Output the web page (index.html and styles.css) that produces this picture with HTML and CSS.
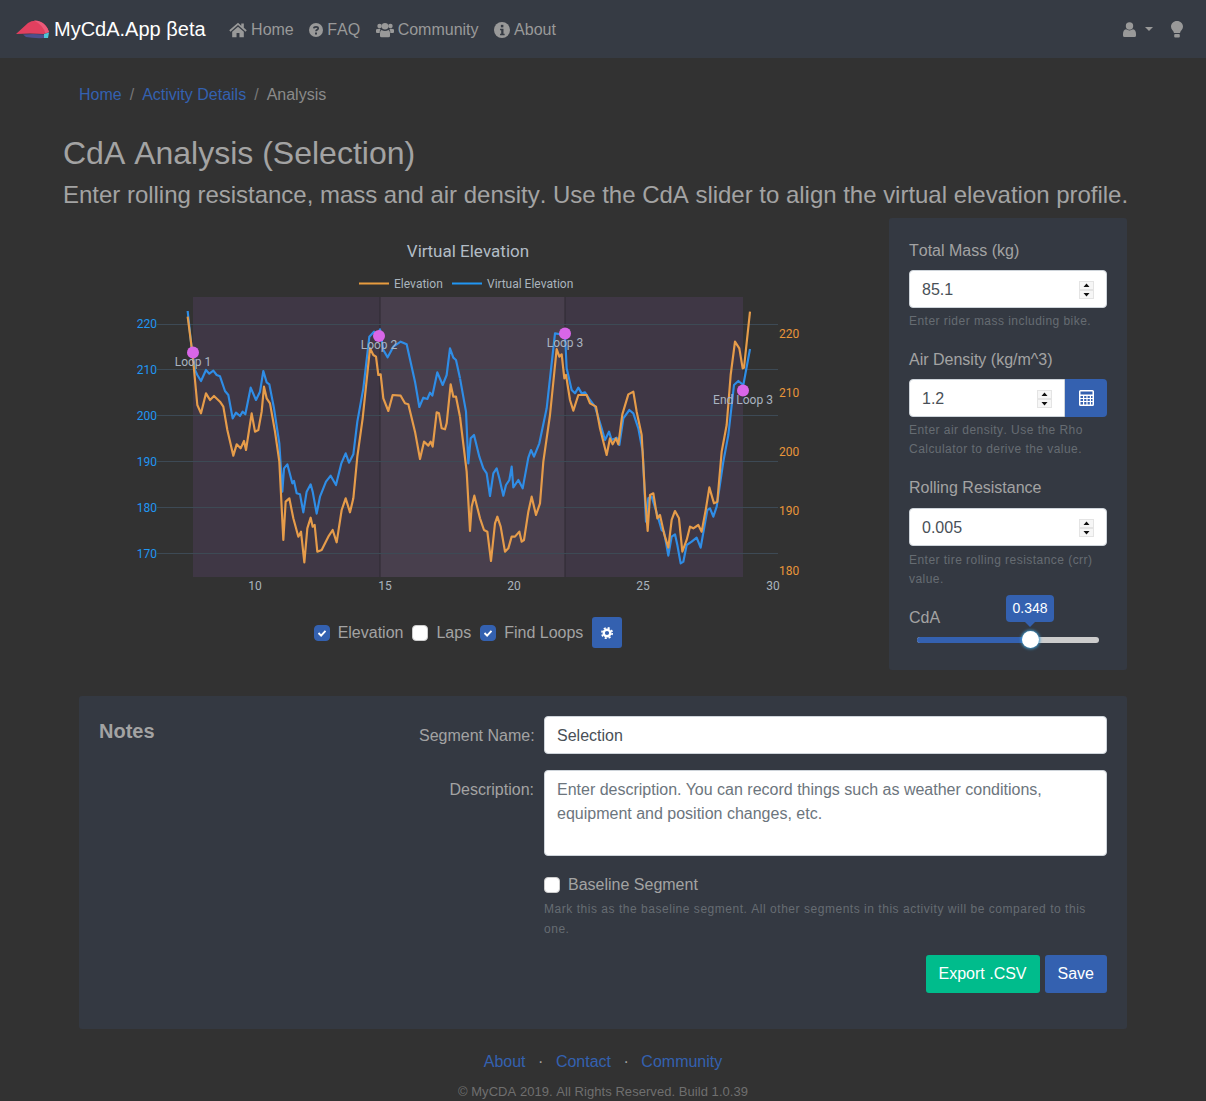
FILE: index.html
```html
<!DOCTYPE html>
<html>
<head>
  <title>CdA Analysis</title>
  <meta charset="UTF-8">
  <link rel="stylesheet" href="styles.css">
</head>
<body>

  <nav class="navbar">
    <a class="brand" href="#">
      <svg class="logo" width="36" height="24" viewBox="0 0 36 24">
        <path d="M0 18 L12 7 Q18 3 25 6 Q31 9 33 16 L28 18 Q14 17 0 18z" fill="#e2405f"/>
        <path d="M18 4.500 Q25 4.500 29 9 Q32 12 33 16 L29.500 17.500 Q27 9 18 4.500z" fill="#ec5a7a"/>
        <path d="M7 18.500 Q17 17.500 28 18.500 L28 22 Q18 22.500 10 21z" fill="#4d4f8c"/>
        <path d="M28 18 L33 16.500 L32 22 L28 22z" fill="#4fc6d6"/>
      </svg>
      MyCdA.App βeta
    </a>
    <a class="nav-link" href="#">
      <svg class="icon" width="18" height="16" viewBox="0 0 24 22"><path d="M12 1 L0 11.500 1.600 13.300 12 4.200 22.400 13.300 24 11.500 20 8V2h-3.500v3z M4 13.500V21h6v-6h4v6h6v-7.500L12 6.500z" fill="#999"/></svg>
      Home
    </a>
    <a class="nav-link" href="#">
      <svg class="icon" width="14" height="14" viewBox="0 0 14 14"><circle cx="7" cy="7" r="7" fill="#999"/><path d="M4.800 5.300 C5 3.300 9.200 3.200 9.200 5.400 C9.200 6.800 7 6.800 7 8.300" fill="none" stroke="#363b44" stroke-width="1.700"/><rect x="6" y="9.500" width="2" height="2" fill="#363b44"/></svg>
      FAQ
    </a>
    <a class="nav-link" href="#">
      <svg class="icon" width="18" height="16" viewBox="0 0 18 16"><circle cx="3.600" cy="4" r="2.300" fill="#999"/><circle cx="14.400" cy="4" r="2.300" fill="#999"/><circle cx="9" cy="4.200" r="3.300" fill="#999"/><path d="M0 7.500 Q2 6.500 4.500 7 Q3.500 9 3.700 11 H1 Q0 11 0 10z M18 7.500 Q16 6.500 13.500 7 Q14.500 9 14.300 11 H17 Q18 11 18 10z M5.500 8 Q9 10 12.500 8 Q14 8.500 14 12 V14 Q14 15.200 12.500 15.200 H5.500 Q4 15.200 4 14 V12 Q4 8.500 5.500 8z" fill="#999"/></svg>
      Community
    </a>
    <a class="nav-link" href="#">
      <svg class="icon" width="16" height="16" viewBox="0 0 14 14"><circle cx="7" cy="7" r="7" fill="#999"/><rect x="6" y="2.500" width="2.200" height="2.200" fill="#363b44"/><path d="M5.300 6h3v4.300h1v1.300H5.300v-1.300h1V7.300h-1z" fill="#363b44"/></svg>
      About
    </a>
    <div class="nav-right">
      <svg width="13" height="15" viewBox="0 0 13 15"><circle cx="6.500" cy="4" r="3.700" fill="#999"/><path d="M0 12 Q0 8 3 7.300 Q6.500 9.500 10 7.300 Q13 8 13 12 V13.500 Q13 15 11.500 15 H1.500 Q0 15 0 13.500z" fill="#999"/></svg>
      <span class="caret"></span>
      <svg class="bulb" width="12" height="17" viewBox="0 0 12 17"><path d="M6 0 C2.500 0 0 2.500 0 5.800 C0 8.500 2.500 9.500 3 12 H9 C9.500 9.500 12 8.500 12 5.800 C12 2.500 9.500 0 6 0z" fill="#999"/><rect x="3.200" y="13" width="5.600" height="3.600" rx="1" fill="#999"/></svg>
    </div>
  </nav>

  <div class="page">
    <ol class="breadcrumb">
      <li><a href="#">Home</a></li>
      <li class="sep">/</li>
      <li><a href="#">Activity Details</a></li>
      <li class="sep">/</li>
      <li>Analysis</li>
    </ol>

    <h2>CdA Analysis (Selection)</h2>
    <p class="lead">Enter rolling resistance, mass and air density. Use the CdA slider to align the virtual elevation profile.</p>

    <div class="analysis-row">
      <div class="chart-col">
        <svg class="chart" width="810" height="386" viewBox="63 218 810 386">
          <rect x="193" y="297" width="550" height="280" fill="#3f3745"/>
          <rect x="380" y="297" width="185" height="280" fill="#483f4d"/>
          <path d="M380 297v280M565 297v280" stroke="#2f2a33" stroke-width="1"/>
          <path d="M157 324.500H778M157 369.500H778M157 415.500H778M157 461.500H778M157 507.500H778M157 553.500H778" stroke="#3d4a55" stroke-width="1"/>

          <text class="chart-title" x="468" y="257">Virtual Elevation</text>

          <path d="M359 283.500h30" stroke="#e89c3f" stroke-width="2"/>
          <text class="legend" x="394" y="288">Elevation</text>
          <path d="M452 283.500h30" stroke="#2196f3" stroke-width="2"/>
          <text class="legend" x="487" y="288">Virtual Elevation</text>

          <g class="axis-left">
            <text x="157" y="328">220</text>
            <text x="157" y="374">210</text>
            <text x="157" y="420">200</text>
            <text x="157" y="466">190</text>
            <text x="157" y="512">180</text>
            <text x="157" y="558">170</text>
          </g>
          <g class="axis-right">
            <text x="779" y="338">220</text>
            <text x="779" y="397">210</text>
            <text x="779" y="456">200</text>
            <text x="779" y="515">190</text>
            <text x="779" y="575">180</text>
          </g>
          <g class="axis-bottom">
            <text x="255" y="590">10</text>
            <text x="385" y="590">15</text>
            <text x="514" y="590">20</text>
            <text x="643" y="590">25</text>
            <text x="773" y="590">30</text>
          </g>

          <g transform="translate(120 235) scale(.33333)">
            <polyline class="line-blue" points="203,228 215,340 225,405 232,420 243,438 258,405 268,416 280,407 290,420 300,424 315,468 325,480 338,550 348,533 360,543 368,530 376,538 392,458 408,495 420,470 430,408 440,442 448,448 462,520 478,625 487,770 492,700 502,688 517,745 522,738 530,775 540,778 550,832 560,770 572,748 578,770 590,836 600,785 618,740 632,722 648,750 664,685 677,655 687,683 700,658 712,560 730,460 748,305 762,290 775,300 780,283 790,345 803,367 820,335 842,320 860,328 885,440 898,516 910,488 922,492 930,473 937,482 952,412 968,450 980,420 990,340 1000,368 1008,375 1020,430"/>
          </g>
          <g transform="translate(460 235) scale(.33333)">
            <polyline class="line-blue" points="0,430 18,530 25,685 32,610 42,600 58,665 70,700 80,715 90,783 100,715 110,700 118,730 130,782 138,750 148,735 155,695 160,757 175,735 188,760 205,668 213,645 222,665 238,625 260,520 285,295 315,300 320,400 335,465 345,475 355,458 365,475 375,472 390,495 405,515 425,580 435,615 447,590 455,615 470,608 478,630 490,550 508,525 520,535 535,580 548,650 558,860 565,790 575,785 592,840 605,885 612,890 625,962 635,905 645,898 652,930 662,985 670,980 680,930 695,920 710,908 722,938 742,825 750,820 760,845 770,815 790,680 805,600 822,450 835,438 850,450 870,342"/>
          </g>
          <g transform="translate(120 235) scale(.33333)">
            <polyline class="line-orange" points="203,245 218,360 232,510 243,535 258,475 270,495 282,483 300,500 310,515 322,585 340,662 350,628 362,640 372,618 378,645 395,535 405,590 415,585 425,530 432,455 440,490 450,505 465,590 478,680 490,915 497,800 508,790 520,850 535,905 543,890 553,982 562,880 572,848 578,875 584,870 592,950 605,945 625,905 638,885 650,922 665,825 677,790 690,832 700,790 712,665 728,550 750,340 760,360 768,365 775,420 782,418 790,490 805,528 818,480 842,482 855,505 865,508 885,590 900,672 912,620 925,632 932,620 938,635 950,532 957,535 965,580 975,583 980,565 992,448 1000,485 1008,485 1020,545"/>
          </g>
          <g transform="translate(460 235) scale(.33333)">
            <polyline class="line-orange" points="0,545 20,710 30,888 35,815 43,782 60,850 72,885 82,890 93,978 105,865 112,845 122,875 135,950 145,940 155,905 165,905 178,890 185,920 192,915 205,830 215,785 228,840 240,805 250,680 270,540 290,342 298,365 305,358 313,430 318,420 330,495 340,527 355,480 380,480 390,505 408,515 420,580 440,660 450,610 458,628 468,610 475,628 487,538 505,478 520,470 530,530 545,600 555,780 563,888 570,780 580,775 592,850 600,840 612,895 625,938 635,855 645,828 657,850 667,950 680,915 690,875 700,880 715,870 725,890 738,820 748,757 762,805 772,800 785,650 800,570 812,420 825,320 838,340 848,400 852,398 870,230"/>
          </g>

          <circle class="marker" cx="193" cy="352.500" r="6"/>
          <circle class="marker" cx="379" cy="336" r="6"/>
          <circle class="marker" cx="565" cy="333.500" r="6"/>
          <circle class="marker" cx="743" cy="390.500" r="6"/>
          <text class="loop-label" x="193" y="366">Loop 1</text>
          <text class="loop-label" x="379" y="349">Loop 2</text>
          <text class="loop-label" x="565" y="347">Loop 3</text>
          <text class="loop-label" x="743" y="404">End Loop 3</text>
        </svg>

        <div class="chart-options">
          <label class="check"><input type="checkbox" checked> Elevation</label>
          <label class="check"><input type="checkbox"> Laps</label>
          <label class="check"><input type="checkbox" checked> Find Loops</label>
          <button class="btn btn-primary btn-gear" type="button">
            <svg width="12" height="12" viewBox="0 0 12 12"><circle cx="6" cy="6" r="3.300" fill="none" stroke="#fff" stroke-width="2.400"/><circle cx="6" cy="6" r="5.200" fill="none" stroke="#fff" stroke-width="1.600" stroke-dasharray="2.100 2"/></svg>
          </button>
        </div>
      </div>

      <aside class="params">
        <label for="mass">Total Mass (kg)</label>
        <input class="form-control" type="number" id="mass" value="85.1" step="0.1">
        <small>Enter rider mass including bike.</small>

        <label for="rho">Air Density (kg/m^3)</label>
        <div class="input-group">
          <input class="form-control" type="number" id="rho" value="1.2" step="0.1">
          <button class="btn btn-primary btn-calc" type="button">
            <svg width="15" height="16" viewBox="0 0 15 16"><path fill-rule="evenodd" d="M1.500 0h12A1.500 1.500 0 0 1 15 1.500v13a1.500 1.500 0 0 1-1.500 1.500h-12A1.500 1.500 0 0 1 0 14.500v-13A1.500 1.500 0 0 1 1.500 0z M1.500 1.500v3h12v-3z M1.500 6v2h2.500V6z M5.200 6v2h2.200V6z M8.600 6v2h2.200V6z M12 6v2h1.500V6z M1.500 9v2h2.500V9z M5.200 9v2h2.200V9z M8.600 9v2h2.200V9z M12 9v2h1.500V9z M1.500 12v2.500h2.500V12z M5.200 12v2.500h2.200V12z M8.600 12v2.500h2.200V12z M12 12v2.500h1.500V12z" fill="#fff"/></svg>
          </button>
        </div>
        <small>Enter air density. Use the Rho Calculator to derive the value.</small>

        <label class="label-roll" for="crr">Rolling Resistance</label>
        <input class="form-control" type="number" id="crr" value="0.005" step="0.001">
        <small class="help-roll">Enter tire rolling resistance (crr) value.</small>

        <div class="cda-label">CdA</div>
        <div class="slider">
          <div class="slider-fill"></div>
          <div class="slider-knob"></div>
          <div class="slider-tip">0.348</div>
        </div>
      </aside>
    </div>

    <section class="notes">
      <h4>Notes</h4>
      <form class="notes-form">
        <label for="segment">Segment Name:</label>
        <input class="form-control" type="text" id="segment" value="Selection">

        <label class="label-top" for="description">Description:</label>
        <textarea class="form-control" id="description" rows="3" placeholder="Enter description. You can record things such as weather conditions, equipment and position changes, etc."></textarea>

        <div class="baseline">
          <label class="check"><input type="checkbox"> Baseline Segment</label>
          <small>Mark this as the baseline segment. All other segments in this activity will be compared to this one.</small>
        </div>

        <div class="notes-buttons">
          <button class="btn btn-success" type="button">Export .CSV</button>
          <button class="btn btn-primary" type="button">Save</button>
        </div>
      </form>
    </section>
  </div>

  <footer>
    <div class="footer-links">
      <a href="#">About</a><span>·</span><a href="#">Contact</a><span>·</span><a href="#">Community</a>
    </div>
    <div class="copyright">© MyCDA 2019. All Rights Reserved. Build 1.0.39</div>
  </footer>

</body>
</html>
```

FILE: styles.css
```css
* {
  box-sizing: border-box;
}

html, body {
  height: 1101px;
  overflow: hidden;
}

body {
  margin: 0;
  background-color: #323232;
  color: #a3a3a3;
  font-family: "Liberation Sans", Arial, sans-serif;
  font-size: 16px;
  font-kerning: none;
  line-height: 1.5;
}

a {
  color: #3461b0;
  text-decoration: none;
}

/* Top bar */
.navbar {
  display: flex;
  align-items: center;
  height: 58px;
  padding: 0 16px;
  background-color: #363b44;
}

.brand {
  display: flex;
  align-items: center;
  gap: 2px;
  margin-right: 23.500px;
  color: #fff;
  font-size: 20px;
}

.logo {
  margin-top: -2px;
}

.nav-link {
  display: flex;
  align-items: center;
  gap: 4px;
  margin-top: 1px;
  margin-right: 15.500px;
  color: #999;
}

.nav-right {
  display: flex;
  align-items: center;
  margin-left: auto;
  padding-right: 7px;
}

.caret {
  width: 0;
  height: 0;
  margin: 0 18px 0 9px;
  border-top: 4px solid #999;
  border-left: 4px solid transparent;
  border-right: 4px solid transparent;
}

/* Main page */
.page {
  padding: 0 79px 0 63px;
}

.breadcrumb {
  display: flex;
  gap: 8px;
  margin: 0;
  padding: 25px 16px 0;
  list-style: none;
  color: #8a8a8a;
  height: 72px;
}

.breadcrumb .sep {
  color: #777;
}

h2 {
  margin: 0;
  font-size: 32px;
  font-weight: 400;
  line-height: 46px;
}

.lead {
  margin: 0;
  font-size: 24px;
  letter-spacing: -.02px;
  line-height: 38px;
  white-space: nowrap;
}

.analysis-row {
  display: flex;
  gap: 16px;
  margin-top: 4px;
}

.chart-col {
  width: 810px;
}

.chart {
  display: block;
}

.chart text {
  font-family: Roboto, sans-serif;
  font-size: 12px;
}

.chart .chart-title {
  fill: #b3bdc6;
  font-size: 17px;
  text-anchor: middle;
}

.chart .legend {
  fill: #aab4bd;
}

.axis-left text {
  fill: #2196f3;
  text-anchor: end;
}

.axis-right text {
  fill: #e8953a;
}

.axis-bottom text {
  fill: #a9b4be;
  text-anchor: middle;
}

.line-blue,
.line-orange {
  fill: none;
  stroke-width: 6.500;
  stroke-linejoin: round;
}

.line-blue {
  stroke: #2f8de6;
}

.line-orange {
  stroke: #e69c4a;
}

.marker {
  fill: #d966e8;
}

.chart .loop-label {
  fill: #a9b4c0;
  text-anchor: middle;
}

.chart-options {
  display: flex;
  align-items: center;
  justify-content: center;
  gap: 9px;
  margin-top: 13px;
}

.check {
  display: flex;
  align-items: center;
  gap: 8px;
}

.check input {
  appearance: none;
  width: 16px;
  height: 16px;
  margin: 0;
  border: 1px solid #ccc;
  border-radius: 4px;
  background-color: #fff;
}

.check input:checked {
  border-color: #3461b0;
  background: #3461b0 url("data:image/svg+xml,%3Csvg xmlns='http://www.w3.org/2000/svg' viewBox='0 0 16 16'%3E%3Cpath d='M4 8l3 3 5-5.500' fill='none' stroke='%23fff' stroke-width='2.200'/%3E%3C/svg%3E") center no-repeat;
}

.btn {
  padding: 6px 13px;
  border: none;
  border-radius: 3px;
  color: #fff;
  font-family: inherit;
  font-size: 16px;
  line-height: 26px;
}

.btn-primary {
  background-color: #3461b0;
}

.btn-success {
  background-color: #00bc8c;
}

.btn-gear {
  display: flex;
  align-items: center;
  justify-content: center;
  width: 30px;
  height: 31px;
  padding: 0;
}

/* Parameters panel */
.params {
  width: 238px;
  height: 452px;
  padding: 21px 20px 20px;
  background-color: #343942;
  border-radius: 3px;
}

.params label {
  display: block;
  margin-bottom: 7px;
  line-height: 24px;
}

.params .label-roll {
  margin-bottom: 8px;
}

.params small {
  display: block;
  margin: 4px 0 17.200px;
}

.params .help-roll {
  margin-top: 5px;
}

small {
  color: #666c72;
  font-size: 12px;
  line-height: 19px;
  letter-spacing: .46px;
}

.form-control {
  display: block;
  width: 100%;
  height: 38px;
  padding: 7px 12px 5px;
  border: 1px solid #ced4da;
  border-radius: 4px;
  background-color: #fff;
  color: #495057;
  font-family: inherit;
  font-size: 16px;
  line-height: 24px;
}

.form-control::-webkit-inner-spin-button {
  -webkit-appearance: none;
  width: 15px;
  height: 18px;
  opacity: 1;
  background: url("data:image/svg+xml,%3Csvg xmlns='http://www.w3.org/2000/svg' width='15' height='18'%3E%3Crect width='15' height='18' fill='%23e4e4e4'/%3E%3Crect x='1' y='1' width='13' height='7' fill='%23f6f6f6'/%3E%3Crect x='1' y='10' width='13' height='7' fill='%23f6f6f6'/%3E%3Cpath d='M7.500 2.500l3 3.500h-6zM7.500 15.500l-3-3.500h6z' fill='%23111'/%3E%3C/svg%3E") center no-repeat;
}

.form-control::placeholder {
  color: #6c757d;
}

textarea.form-control {
  height: 86px;
  padding-top: 7px;
  resize: none;
}

.input-group {
  display: flex;
}

.input-group .form-control {
  border-radius: 4px 0 0 4px;
}

.btn-calc {
  display: flex;
  flex: none;
  align-items: center;
  justify-content: center;
  width: 42px;
  padding: 0;
  border-radius: 0 4px 4px 0;
}

.cda-label {
  margin-top: -1px;
  line-height: 24px;
}

.slider {
  position: relative;
  height: 6px;
  margin: 7px 8px 0;
  border-radius: 3px;
  background-color: #ccc;
}

.slider-fill {
  width: 113px;
  height: 6px;
  border-radius: 3px;
  background-color: #3461b0;
}

.slider-knob {
  position: absolute;
  left: 105px;
  top: -6px;
  width: 17px;
  height: 17px;
  border-radius: 50%;
  background-color: #fff;
  box-shadow: 0 0 3px 1px #3f9bd0;
}

.slider-tip {
  position: absolute;
  left: 89px;
  top: -42px;
  width: 48px;
  height: 27px;
  border-radius: 4px;
  background-color: #3461b0;
  color: #fff;
  font-size: 14px;
  line-height: 27px;
  text-align: center;
}

.slider-tip::after {
  content: "";
  position: absolute;
  left: 19px;
  bottom: -5px;
  border-top: 5px solid #3461b0;
  border-left: 5px solid transparent;
  border-right: 5px solid transparent;
}

/* Notes panel */
.notes {
  display: flex;
  height: 333px;
  margin: 26px 0 0 16px;
  padding: 20px;
  background-color: #343942;
  border-radius: 3px;
}

.notes h4 {
  flex: none;
  width: 320px;
  margin: 0;
  font-size: 20px;
  line-height: 30px;
}

.notes-form {
  display: grid;
  flex: 1;
  grid-template-columns: 115px 563px;
  grid-template-rows: 38px 86px auto auto;
  column-gap: 10px;
  row-gap: 16px;
  align-content: start;
}

.notes-form > label {
  align-self: center;
  padding-top: 2px;
  text-align: right;
  white-space: nowrap;
}

.notes-form > .label-top {
  align-self: start;
  padding-top: 8px;
}

.baseline {
  grid-column: 2;
  margin-top: 1px;
}

.baseline small {
  display: block;
  margin-top: 2px;
  padding-right: 14px;
  letter-spacing: .53px;
  line-height: 20px;
}

.notes-buttons {
  display: flex;
  grid-column: 2;
  justify-content: flex-end;
  gap: 5px;
}

/* Footer */
footer {
  text-align: center;
}

.footer-links {
  display: flex;
  justify-content: center;
  gap: 12.500px;
  margin-top: 21px;
  line-height: 24px;
}

.copyright {
  margin-top: 8px;
  color: #6f6f6f;
  font-size: 13px;
  letter-spacing: .05px;
  line-height: 20px;
}
```
